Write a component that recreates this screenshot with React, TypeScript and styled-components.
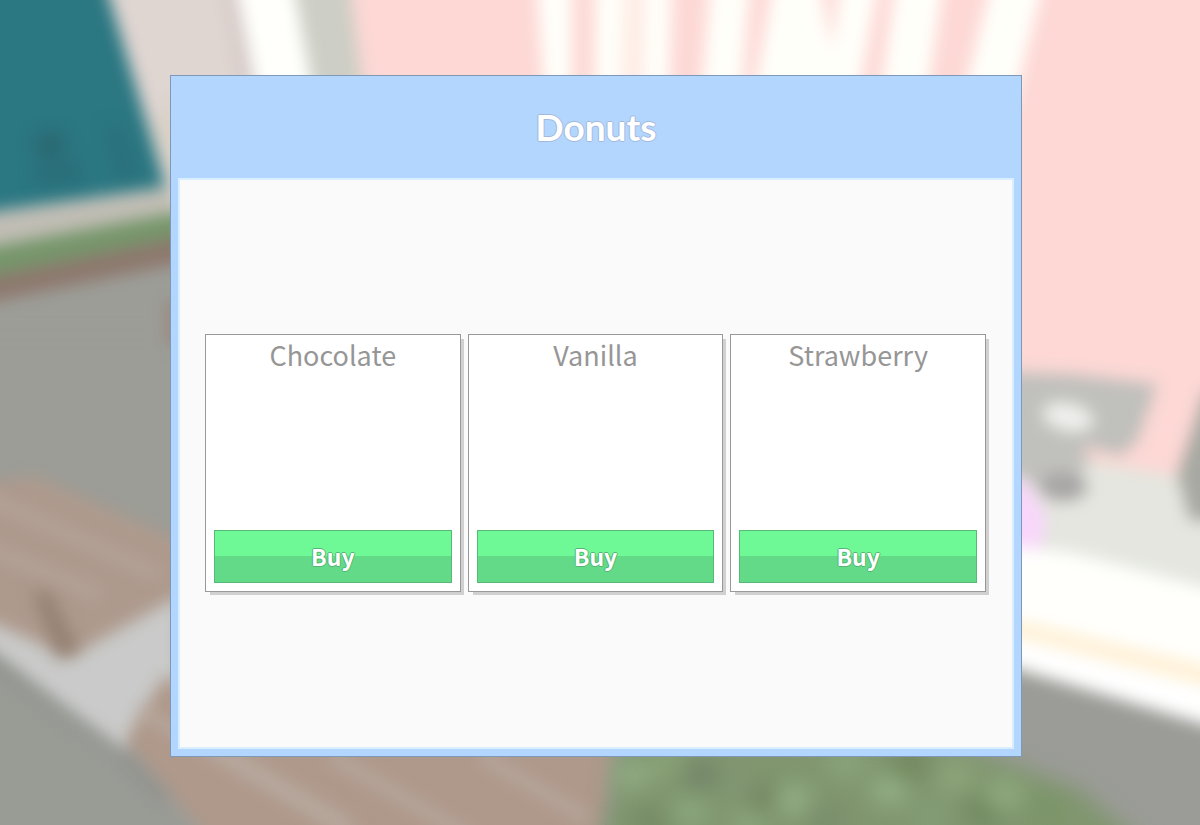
import React from "react";
import styled, { createGlobalStyle } from "styled-components";

const GlobalStyle = createGlobalStyle`
  *, *::before, *::after { box-sizing: border-box; }
  body { margin: 0; background: #9c9d97; font-family: "Noto Sans CJK SC", "Open Sans", sans-serif; }
`;

const Scene = styled.div`
  display: grid;
  grid-template: minmax(100vh, auto) / 1fr;
  overflow: hidden;
`;

const Backdrop = styled.svg`
  grid-area: 1 / 1;
  width: 100%;
  height: 100%;
  min-height: 0;
  contain: size;
`;

const Stage = styled.main`
  grid-area: 1 / 1;
  z-index: 1;
  display: flex;
  padding: 75px 178px 68px 170px;
`;

const Window = styled.section`
  flex: 1;
  display: flex;
  flex-direction: column;
  padding: 0 7px 7px;
  border: 1px solid #7f98b7;
  background: #b2d6fe;
`;

const Header = styled.header`
  display: flex;
  align-items: center;
  justify-content: center;
  height: 102px;
`;

const Title = styled.h1`
  margin: 0;
  font: 700 37px/44px Lato, sans-serif;
  color: #fff;
  text-shadow: 1px 0 #a3b9dc, -1px 0 #a3b9dc, 0 1px #a3b9dc, 0 -1px #a3b9dc;
`;

const Shelf = styled.div`
  flex: 1;
  display: grid;
  grid-template-columns: repeat(3, 1fr);
  align-items: center;
  gap: 7px;
  padding: 24px 26px 26px 25px;
  border: 2px solid #d9efff;
  background: #fafafa;
`;

const Card = styled.article`
  display: flex;
  flex-direction: column;
  justify-content: space-between;
  height: 258px;
  padding: 0 8px 8px;
  border: 1px solid #999;
  background: #fff;
  box-shadow: 4px 4px 0 -1px #d0d0d0;
`;

const Flavor = styled.h2`
  margin: 0;
  font-size: 27px;
  font-weight: 400;
  line-height: 40px;
  text-align: center;
  color: #969696;
`;

const BuyButton = styled.button`
  height: 53px;
  padding: 0;
  border: 1px solid #56b978;
  background: linear-gradient(#6ff996 50%, #63da87 50%);
  font: inherit;
  font-size: 23px;
  font-weight: 700;
  line-height: 36px;
  color: #fff;
  text-shadow: 1px 0 #52b674, -1px 0 #52b674, 0 1px #52b674, 0 -1px #52b674;
  cursor: pointer;
`;

const flavors = ["Chocolate", "Vanilla", "Strawberry"];

const leaves = [
  [632, 775, "#8faa82"], [668, 762, "#8aa276"], [700, 775, "#73876a"],
  [690, 812, "#8aa67b"], [745, 790, "#819774"], [768, 800, "#71845f"],
  [793, 800, "#91ad83"], [846, 763, "#8aa47a"], [890, 790, "#92ae84"],
  [910, 765, "#73885f"], [955, 777, "#8da57b"], [930, 817, "#839d78"],
  [985, 810, "#6f885e"], [1004, 795, "#8fab7e"], [1045, 812, "#7c9568"],
  [825, 820, "#788d6b"], [650, 822, "#748b66"], [750, 825, "#8ba57a"],
] as const;

function StreetBackdrop() {
  return (
    <Backdrop viewBox="0 0 1200 825" preserveAspectRatio="xMidYMid slice" aria-hidden="true">
      <defs>
        <filter id="soft" filterUnits="userSpaceOnUse" x="-80" y="-80" width="1360" height="985" colorInterpolationFilters="sRGB">
          <feGaussianBlur stdDeviation="8" />
        </filter>
        <filter id="softer" filterUnits="userSpaceOnUse" x="-80" y="-80" width="1360" height="985" colorInterpolationFilters="sRGB">
          <feGaussianBlur stdDeviation="11" />
        </filter>
      </defs>
      <rect width="1200" height="825" fill="#9c9d97" />
      <g filter="url(#soft)">
        {/* shop front on the left */}
        <path d="M-60-60H340V330H-60Z" fill="#9c9d97" />
        <path d="M-60-60H250V200L-60 260Z" fill="#dfd5d1" />
        <path d="M214-60H232L258 90H240Z" fill="#d5cac7" />
        <path d="M-60-60H90L110 0L166 187L-60 219Z" fill="#2b7782" />
        <path d="M154 125L177 200V90Z" fill="#d9d1c5" />
        <path d="M-60 221L175 187V215L-60 256Z" fill="#c1beb5" />
        <path d="M-60 256L190 210V235L-60 287Z" fill="#76966b" />
        <path d="M-60 287L190 235V261L-60 312Z" fill="#8d786d" />
        <path d="M165 300H190V345H165Z" fill="#998b82" />
        {/* pale pillar and pink wall */}
        <path d="M227-60H310L332 110H260Z" fill="#fffffc" />
        <path d="M285-60H370L390 110H317Z" fill="#cdcec5" />
        <path d="M344-60H1270V560L1000 410L390 300Z" fill="#fdd8d5" />
        <path d="M534-60H572L572 110H545ZM596-60H629L624 110H594ZM643-60H673L669 110H640ZM714-60H754L740 110H700ZM781-60H812L832 50L845-60H886L856 110H751ZM902-60H950L925 110H878ZM1002-60H1054L1012 110H960Z" fill="#fffffa" />
        <path d="M625-60H647L644 110H620Z" fill="#ffece6" />
        {/* terrace, glow and kerb on the right */}
        <path d="M1000 450L1110 465L1260 490V620L1000 570Z" fill="#e4e6df" />
        <path d="M1000 372L1070 374L1157 384L1137 442L1120 456L1085 446L1080 490L1060 498L1000 465Z" fill="#c0c0bc" />
        <path d="M1178 475L1206 390H1260V520H1190Z" fill="#a6a8a1" />
        <ellipse cx="1068" cy="417" rx="26" ry="14" fill="#f0f0ee" transform="rotate(12 1068 417)" />
        <ellipse cx="1063" cy="487" rx="24" ry="14" fill="#a8a5a5" />
        <path d="M1000 470L1026 482L1046 515L1043 545L1000 560Z" fill="#f9d6fb" />
        <path d="M1000 545L1070 552L1260 602V760L1000 690Z" fill="#fffffc" />
        <path d="M1000 616L1260 679V699L1000 633Z" fill="#fff0d4" />
        <path d="M1000 636L1260 706V750L1000 662Z" fill="#fff" />
        <path d="M1000 664L1260 741V900H850V745Z" fill="#9b9c97" />
        {/* timber decking and pavement */}
        <path d="M-60 610L0 655L65 705L160 800L250 900H-60Z" fill="#999b95" />
        <path d="M-60 600L180 550V690L122 752L65 710L0 658L-60 615Z" fill="#c9cac9" />
        <path d="M-60 490L35 476L190 545V590L70 657L-60 600Z" fill="#ae9a8d" />
        <path d="M165 675L260 740L620 740L590 900H260L125 740Z" fill="#af998b" />
      </g>
      <g filter="url(#soft)" fill="none" stroke="#bbaea5" strokeWidth="12">
        <path d="M-20 495L160 575M-20 545L100 595" opacity=".5" />
        <path d="M140 710L360 840M200 735L350 825M330 755L475 840M480 755L590 820" opacity=".7" />
      </g>
      <g filter="url(#soft)">
        <path d="M-30 650L0 666L60 710L115 750L165 800" fill="none" stroke="#858783" strokeWidth="9" opacity=".6" />
        <path d="M32 592L50 592L80 650L58 660Z" fill="#8f7c6e" opacity=".8" />
        <g opacity=".6">
          <ellipse cx="50" cy="145" rx="16" ry="14" fill="#2b616a" />
          <path d="M36 163L76 158L82 184H36Z" fill="#2a6974" />
          <path d="M106 122L125 138L138 176L118 178Z" fill="#2b6c77" />
        </g>
      </g>
      <g filter="url(#softer)">
        <path d="M622 740H950L1080 790L1150 850V900H590Z" fill="#80966f" />
      </g>
      <g filter="url(#softer)">
        {leaves.map(([cx, cy, fill]) => (
          <ellipse key={`${cx}-${cy}`} cx={cx} cy={cy} rx="20" ry="16" fill={fill} />
        ))}
      </g>
    </Backdrop>
  );
}

export default function App() {
  return (
    <>
      <GlobalStyle />
      <Scene>
        <StreetBackdrop />
        <Stage>
          <Window aria-labelledby="shop-title">
            <Header>
              <Title id="shop-title">Donuts</Title>
            </Header>
            <Shelf>
              {flavors.map((flavor) => (
                <Card key={flavor}>
                  <Flavor>{flavor}</Flavor>
                  <BuyButton type="button">Buy</BuyButton>
                </Card>
              ))}
            </Shelf>
          </Window>
        </Stage>
      </Scene>
    </>
  );
}
